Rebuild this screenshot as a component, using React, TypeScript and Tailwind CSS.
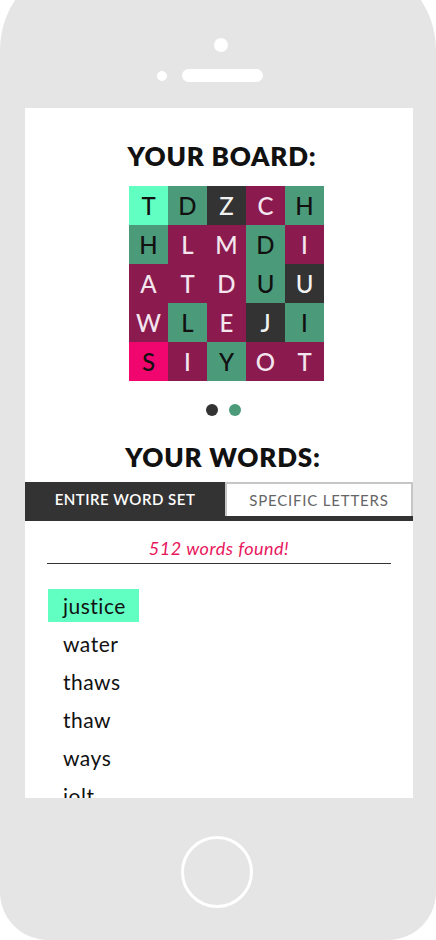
const MINT = "bg-[#62ffc3] text-[#111]";
const GREEN = "bg-[#4b9b7b] text-[#111]";
const DARK = "bg-[#333333] text-[#f2f2f2]";
const PLUM = "bg-[#8b1a4f] text-[#f4e6ee]";
const PINK = "bg-[#f0066e] text-[#111]";

const board: [string, string][][] = [
  [["T", MINT], ["D", GREEN], ["Z", DARK], ["C", PLUM], ["H", GREEN]],
  [["H", GREEN], ["L", PLUM], ["M", PLUM], ["D", GREEN], ["I", PLUM]],
  [["A", PLUM], ["T", PLUM], ["D", PLUM], ["U", GREEN], ["U", DARK]],
  [["W", PLUM], ["L", GREEN], ["E", PLUM], ["J", DARK], ["I", GREEN]],
  [["S", PINK], ["I", PLUM], ["Y", GREEN], ["O", PLUM], ["T", PLUM]],
];

const words = ["justice", "water", "thaws", "thaw", "ways", "jolt"];

export default function App() {
  return (
    <div
      className="h-[940px] w-[436px] overflow-hidden bg-white"
      style={{ fontFamily: "Lato, 'Noto Sans', sans-serif" }}
    >
      <div className="-mt-[40px] flex h-[980px] w-[436px] flex-col rounded-t-[90px] rounded-b-[48px] bg-[#e5e5e5]">
        {/* earpiece */}
        <div className="h-[148px] shrink-0 pt-[78px]">
          <div className="ml-[214px] h-[14px] w-[14px] rounded-full bg-white" />
          <div className="mt-[17px] flex items-center pl-[157px]">
            <div className="h-[10px] w-[10px] rounded-full bg-white" />
            <div className="ml-[15px] h-[13px] w-[81px] rounded-full bg-white" />
          </div>
        </div>

        {/* screen */}
        <div className="mx-[25px] h-[690px] w-[388px] shrink-0 overflow-hidden bg-white">
          <h1 className="pl-[6px] pt-[35px] text-center text-[26px] font-extrabold leading-[26px] tracking-[0.8px] text-[#111]">
            YOUR BOARD:
          </h1>

          <div className="ml-[104px] mt-[17px] grid w-[195px] grid-cols-5">
            {board.flat().map(([letter, cls], i) => (
              <div
                key={i}
                className={`flex h-[39px] w-[39px] items-center justify-center text-[24px] font-medium leading-none ${cls}`}
              >
                {letter}
              </div>
            ))}
          </div>

          <div className="mt-[23px] flex justify-center gap-[11px] pl-[9px]">
            <div className="h-[12px] w-[12px] rounded-full bg-[#333]" />
            <div className="h-[12px] w-[12px] rounded-full bg-[#4b9b7b]" />
          </div>

          <h2 className="mt-[28px] pl-[8px] text-center text-[26px] font-extrabold leading-[26px] tracking-[0.8px] text-[#111]">
            YOUR WORDS:
          </h2>

          <div className="mt-[12px] flex border-b-[5px] border-[#333]">
            <div className="flex h-[34px] w-[200px] items-center justify-center bg-[#333] text-[15px] font-semibold tracking-[0.5px] text-white">
              ENTIRE WORD SET
            </div>
            <div className="flex h-[34px] flex-1 items-center justify-center border-x-2 border-t-2 border-[#c6c6c6] text-[15px] tracking-[0.8px] text-[#666]">
              SPECIFIC LETTERS
            </div>
          </div>

          <div className="mx-[22px] mt-[19px] border-b border-[#333] pb-[6px] text-center text-[18px] italic leading-[17px] tracking-[0.5px] text-[#e8175d]">
            512 words found!
          </div>

          <ul className="ml-[23px] mt-[25px]">
            {words.map((w, i) => (
              <li key={w} className="mb-[5px] h-[33px]">
                <span
                  className={`inline-block h-[33px] pl-[15px] pr-[12px] text-[21px] leading-[33px] tracking-[0.5px] text-[#111] ${
                    i === 0 ? "w-[91px] bg-[#62ffc3]" : ""
                  }`}
                >
                  {w}
                </span>
              </li>
            ))}
          </ul>
        </div>

        {/* home button */}
        <div className="mt-[38px] flex pl-[181px]">
          <div className="h-[72px] w-[72px] rounded-full border-[3px] border-white" />
        </div>
      </div>
    </div>
  );
}
